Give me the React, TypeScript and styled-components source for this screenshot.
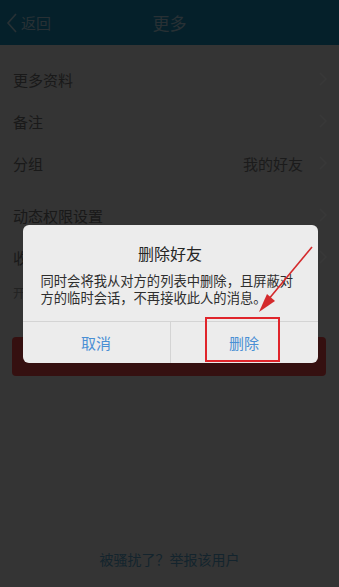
import React from 'react';
import styled, { createGlobalStyle } from 'styled-components';

const GlobalStyle = createGlobalStyle`
  html, body {
    margin: 0;
    padding: 0;
  }
  body {
    font-family: "Noto Sans CJK SC", "Noto Sans", sans-serif;
    background: #ebebeb;
  }
`;

const Page = styled.div`
  position: relative;
  min-height: 100vh;
  display: flex;
  flex-direction: column;
  background: #ebebeb;
  overflow: hidden;
`;

const Header = styled.div`
  height: 45px;
  background: #1791bf;
  display: flex;
  align-items: center;
  position: relative;
`;

const BackButton = styled.div`
  display: flex;
  align-items: center;
  gap: 3px;
  padding-left: 6px;
  color: #b4dcec;
  font-size: 15px;
`;

const Title = styled.div`
  position: absolute;
  left: 0;
  right: 0;
  text-align: center;
  color: #b4dcec;
  font-size: 17px;
  pointer-events: none;
`;

const Section = styled.div<{ $gap: number }>`
  margin-top: ${(p) => p.$gap}px;
`;

const Row = styled.div`
  height: 42px;
  display: flex;
  align-items: center;
  padding: 0 12px 0 13px;
  font-size: 15px;
  color: #737373;
`;

const Label = styled.span`
  flex: 1;
`;

const Value = styled.span`
  color: #7d7d7d;
  margin-right: 16px;
`;

const Hint = styled.div`
  padding: 6px 13px 0;
  font-size: 12px;
  color: #9a9a9a;
`;

const DangerButton = styled.div`
  margin: 36px 13px 0 12px;
  height: 39px;
  border-radius: 4px;
  background: #f24a4a;
  color: #f24a4a;
  display: flex;
  align-items: center;
  justify-content: center;
  font-size: 15px;
`;

const Report = styled.div`
  margin-top: auto;
  padding-bottom: 18px;
  text-align: center;
  font-size: 14px;
  line-height: 20px;
  color: #5aa6cc;
`;

// dimming layer of the modal
const Overlay = styled.div`
  position: fixed;
  inset: 0;
  background: rgba(0, 0, 0, 0.78);
  display: flex;
  align-items: center;
  justify-content: center;
`;

const Dialog = styled.div`
  position: relative;
  width: 295px;
  margin-left: 1px;
  background: #ececec;
  border-radius: 6px;
`;

const DialogTitle = styled.div`
  padding-top: 18px;
  text-align: center;
  font-size: 16px;
  line-height: 20px;
  color: #262626;
`;

const DialogBody = styled.div`
  padding: 9px 18px 15px;
  font-size: 13.3px;
  line-height: 17px;
  color: #2e2e2e;
`;

const ButtonBar = styled.div`
  display: flex;
  height: 41px;
  border-top: 1px solid #d4d4d4;
`;

const DialogButton = styled.div`
  flex: 1;
  display: flex;
  align-items: center;
  justify-content: center;
  font-size: 15px;
  color: #4a8fd4;
  & + & {
    border-left: 1px solid #d4d4d4;
  }
`;

const Highlight = styled.div`
  position: absolute;
  left: 182px;
  top: 92px;
  width: 75px;
  height: 45px;
  box-sizing: border-box;
  border: 2.5px solid #e0252b;
`;

const Arrow = styled.svg`
  position: absolute;
  left: 0;
  top: 0;
  overflow: visible;
  pointer-events: none;
`;

const Chevron = ({ color = '#ffffff' }: { color?: string }) => (
  <svg width="8" height="14" viewBox="0 0 8 14">
    <path d="M1 1 L7 7 L1 13" fill="none" stroke={color} strokeWidth="1.3" />
  </svg>
);

const rows = [
  [{ label: '更多资料' }, { label: '备注' }, { label: '分组', value: '我的好友' }],
  [{ label: '动态权限设置' }, { label: '收到的赞' }],
];

export default function App() {
  return (
    <>
      <GlobalStyle />
      <Page>
        <Header>
          <BackButton>
            <svg width="12" height="20" viewBox="0 0 12 20">
              <path d="M10 1 L2 10 L10 19" fill="none" stroke="#b4dcec" strokeWidth="1.6" />
            </svg>
            返回
          </BackButton>
          <Title>更多</Title>
        </Header>
        {rows.map((group, gi) => (
          <Section key={gi} $gap={gi === 0 ? 13 : 10}>
            {group.map((r) => (
              <Row key={r.label}>
                <Label>{r.label}</Label>
                {'value' in r && r.value ? <Value>{r.value}</Value> : null}
                <Chevron />
              </Row>
            ))}
          </Section>
        ))}
        <Hint>开启后不接收</Hint>
        <DangerButton>删除好友</DangerButton>
        <Report>被骚扰了？举报该用户</Report>

        <Overlay>
          <Dialog>
            <DialogTitle>删除好友</DialogTitle>
            <DialogBody>
              同时会将我从对方的列表中删除，且屏蔽对
              <br />
              方的临时会话，不再接收此人的消息。
            </DialogBody>
            <ButtonBar>
              <DialogButton>取消</DialogButton>
              <DialogButton>删除</DialogButton>
            </ButtonBar>
            <Highlight />
            <Arrow width="295" height="140">
              <line x1="289" y1="22" x2="240" y2="81" stroke="#d42a2c" strokeWidth="1.6" />
              <polygon points="236,87 244,69 252,76" fill="#d42a2c" />
            </Arrow>
          </Dialog>
        </Overlay>
      </Page>
    </>
  );
}
